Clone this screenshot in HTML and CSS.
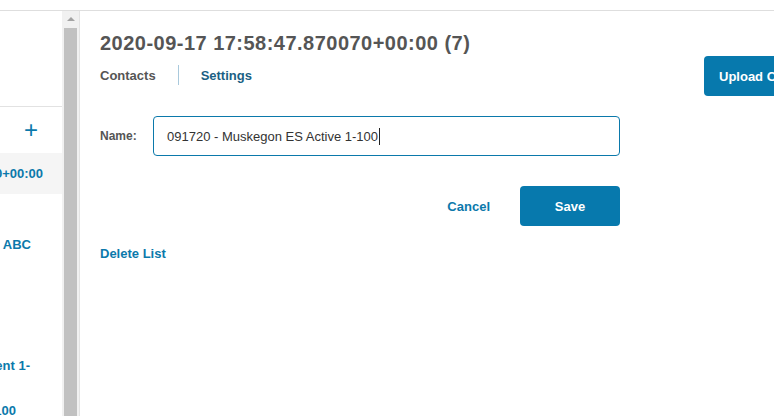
FILE: index.html
```html
<!DOCTYPE html>
<html>
<head>
<meta charset="utf-8">
<link rel="stylesheet" href="styles.css">
</head>
<body>
<div class="topbar"></div>
<div class="layout">
  <aside class="sidebar">
    <div class="side-head"></div>
    <div class="side-add"><span class="plus">+</span></div>
    <div class="side-item selected pr19"><span>2020-09-17 17:58:47.870070+00:00</span></div>
    <div class="side-item tall pr31"><span>091720 - Muskegon ABC</span></div>
    <div class="side-item multi pr32"><span>091720 - Muskegon ES Active Parent 1-</span><span class="tail">1-100</span></div>
  </aside>
  <div class="scrollbar">
    <div class="arrow"></div>
    <div class="thumb"></div>
  </div>
  <main class="main">
    <div class="header">
      <div class="head-left">
        <h1 class="title">2020-09-17 17:58:47.870070+00:00 (7)</h1>
        <nav class="tabs">
          <span class="tab">Contacts</span>
          <span class="tab-sep"></span>
          <span class="tab active">Settings</span>
        </nav>
      </div>
      <button class="btn upload">Upload Contacts</button>
    </div>
    <form class="form">
      <div class="field">
        <label class="label">Name:</label>
        <div class="input">091720 - Muskegon ES Active 1-100<span class="caret"></span></div>
      </div>
      <div class="actions">
        <span class="link cancel">Cancel</span>
        <button type="button" class="btn save">Save</button>
      </div>
      <span class="link delete">Delete List</span>
    </form>
  </main>
</div>
</body>
</html>
```
FILE: styles.css
```css
* { box-sizing: border-box; }
html, body { margin: 0; padding: 0; }
body {
  width: 774px;
  height: 416px;
  overflow: hidden;
  background: #fff;
  font-family: "Liberation Sans", Arial, sans-serif;
  color: #555;
}
.topbar {
  height: 11px;
  border-bottom: 1px solid #dedede;
}
.layout {
  display: flex;
  height: 405px;
}
.sidebar {
  width: 62px;
  flex: none;
  overflow: hidden;
}
.side-head {
  height: 96px;
  border-bottom: 1px solid #e2e2e2;
}
.side-add {
  height: 46px;
  display: flex;
  align-items: center;
  justify-content: flex-end;
  padding-right: 24px;
}
.plus {
  color: #0b79ab;
  font-size: 24px;
  font-weight: 400;
  line-height: 20px;
}
.side-item {
  height: 41px;
  display: flex;
  align-items: center;
  justify-content: flex-end;
  white-space: nowrap;
  overflow: hidden;
  font-size: 13px;
  font-weight: 700;
  color: #0b79ab;
}
.side-item span { flex: none; }
.side-item.selected { background: #f5f5f5; }
.side-item.tall { height: 100px; }
.side-item.multi {
  height: auto;
  flex-direction: column;
  align-items: flex-end;
  justify-content: flex-start;
  padding-top: 49px;
  line-height: 45px;
}
.side-item .tail { margin-right: 14px; }
.pr19 { padding-right: 19px; }
.pr31 { padding-right: 31px; }
.pr32 { padding-right: 32px; }
.scrollbar {
  width: 18px;
  flex: none;
  background: #f1f1f1;
  border-right: 1px solid #e3e3e3;
  padding: 6px 2px 0 2px;
}
.arrow {
  width: 0;
  height: 0;
  margin: 0 auto;
  border-left: 4px solid transparent;
  border-right: 4px solid transparent;
  border-bottom: 4px solid #a3a3a3;
}
.thumb {
  margin-top: 7px;
  height: 400px;
  background: #c1c1c1;
}
.main {
  flex: 1;
  min-width: 0;
  padding: 20px 0 0 20px;
}
.header {
  display: flex;
  align-items: flex-start;
}
.head-left { flex: 1; }
.title {
  margin: 0;
  font-size: 20px;
  line-height: 24px;
  font-weight: 700;
  color: #555;
  letter-spacing: 0.48px;
}
.tabs {
  margin-top: 10px;
  display: flex;
  align-items: center;
  height: 20px;
}
.tab {
  font-size: 13px;
  font-weight: 700;
  color: #555;
}
.tab.active { color: #1b5f84; }
.tab-sep {
  width: 1px;
  height: 20px;
  background: #a9c9dc;
  margin: 0 22px;
}
.btn {
  border: none;
  border-radius: 4px;
  background: #0779ad;
  color: #fff;
  font-family: "Liberation Sans", Arial, sans-serif;
  font-size: 13px;
  font-weight: 700;
  height: 40px;
  padding: 0;
}
.upload {
  flex: none;
  margin-top: 25px;
  width: 130px;
  margin-right: -60px;
  text-align: left;
  padding-left: 15px;
}
.form {
  margin-top: 20px;
  width: 520px;
}
.field {
  display: flex;
  align-items: center;
}
.label {
  width: 53px;
  font-size: 12px;
  font-weight: 700;
  color: #555;
}
.input {
  flex: 1;
  height: 40px;
  border: 1px solid #0b79ab;
  border-radius: 4px;
  padding-left: 13px;
  display: flex;
  align-items: center;
  font-size: 13px;
  color: #333;
}
.caret {
  width: 1px;
  height: 17px;
  background: #222;
  margin-left: 1px;
}
.actions {
  margin-top: 30px;
  display: flex;
  justify-content: flex-end;
  align-items: center;
}
.link {
  font-size: 13px;
  font-weight: 700;
  color: #0b79ab;
}
.cancel { margin-right: 30px; }
.save { width: 100px; }
.delete {
  display: block;
  margin-top: 20px;
  line-height: 16px;
}
```
